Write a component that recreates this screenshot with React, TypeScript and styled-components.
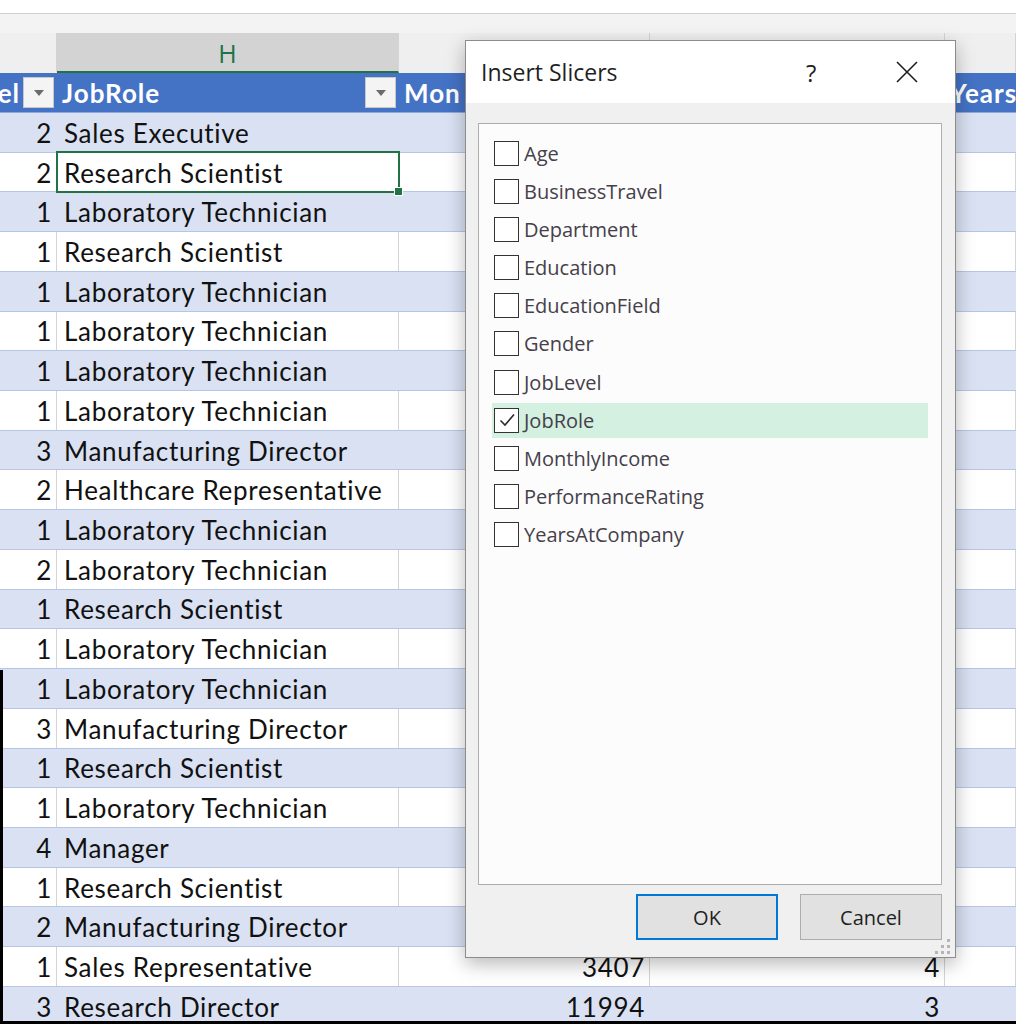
import React from 'react';
import styled, {createGlobalStyle} from "styled-components";

type RowType = {
    level: number
    role: string
    income?: number
    years?: number
}

// only the last two rows show their numbers, the rest sit under the dialog
const rows: RowType[] = [
    {level: 2, role: "Sales Executive"},
    {level: 2, role: "Research Scientist"},
    {level: 1, role: "Laboratory Technician"},
    {level: 1, role: "Research Scientist"},
    {level: 1, role: "Laboratory Technician"},
    {level: 1, role: "Laboratory Technician"},
    {level: 1, role: "Laboratory Technician"},
    {level: 1, role: "Laboratory Technician"},
    {level: 3, role: "Manufacturing Director"},
    {level: 2, role: "Healthcare Representative"},
    {level: 1, role: "Laboratory Technician"},
    {level: 2, role: "Laboratory Technician"},
    {level: 1, role: "Research Scientist"},
    {level: 1, role: "Laboratory Technician"},
    {level: 1, role: "Laboratory Technician"},
    {level: 3, role: "Manufacturing Director"},
    {level: 1, role: "Research Scientist"},
    {level: 1, role: "Laboratory Technician"},
    {level: 4, role: "Manager"},
    {level: 1, role: "Research Scientist"},
    {level: 2, role: "Manufacturing Director"},
    {level: 1, role: "Sales Representative", income: 3407, years: 4},
    {level: 3, role: "Research Director", income: 11994, years: 3},
]

const fields = [
    "Age", "BusinessTravel", "Department", "Education", "EducationField", "Gender",
    "JobLevel", "JobRole", "MonthlyIncome", "PerformanceRating", "YearsAtCompany",
]

const COLS = "57px 342px 251px 295px 1fr"

const GlobalStyle = createGlobalStyle`
  * { box-sizing: border-box; }
  body {
    margin: 0;
    background: #ffffff;
    overflow: hidden;
  }
`

const FilterButton = () => (
    <Filter>
        <svg width="12" height="8" viewBox="0 0 12 8">
            <path d="M1 1h10L6 7z" fill="#6b6b6b"/>
        </svg>
    </Filter>
)

const Checkbox = ({checked}: { checked: boolean }) => (
    <Box>
        {checked && (
            <svg width="20" height="20" viewBox="0 0 20 20">
                <path d="M3.5 10.5l4.5 4.5L17 4.5" fill="none" stroke="#2b2b2b" strokeWidth="1.6"/>
            </svg>
        )}
    </Box>
)

export default function App() {
    return (
        <Page>
            <GlobalStyle/>
            <TopStrip/>
            <BarGap/>
            <ColHeaders>
                <ColHead/>
                <ColHead $active>H</ColHead>
                <ColHead/>
                <ColHead/>
                <ColHead/>
            </ColHeaders>
            <HeaderRow>
                <HeadCell $end>
                    <span>JobLevel</span>
                    <FilterButton/>
                </HeadCell>
                <HeadCell>
                    <span>JobRole</span>
                    <Spacer/>
                    <FilterButton/>
                </HeadCell>
                <HeadCell><span>Mon</span></HeadCell>
                <HeadCell/>
                <HeadCell><span>YearsAtCompany</span></HeadCell>
            </HeaderRow>
            {rows.map((r, i) => (
                <Row key={i} $band={i % 2 === 0}>
                    <Cell $band={i % 2 === 0} $right>{r.level}</Cell>
                    <Cell $band={i % 2 === 0} $selected={i === 1}>{r.role}</Cell>
                    <Cell $band={i % 2 === 0} $right>{r.income}</Cell>
                    <Cell $band={i % 2 === 0} $right>{r.years}</Cell>
                    <Cell $band={i % 2 === 0}/>
                </Row>
            ))}

            <Dialog>
                <TitleBar>
                    <Title>Insert Slicers</Title>
                    <Help>?</Help>
                    <Close>
                        <svg width="22" height="22" viewBox="0 0 22 22">
                            <path d="M1 1L21 21M21 1L1 21" stroke="#1f1f1f" strokeWidth="1.6"/>
                        </svg>
                    </Close>
                </TitleBar>
                <DialogBody>
                    <FieldList>
                        {fields.map(f => (
                            <Field key={f} $checked={f === "JobRole"}>
                                <Checkbox checked={f === "JobRole"}/>
                                <FieldLabel>{f}</FieldLabel>
                            </Field>
                        ))}
                    </FieldList>
                    <Buttons>
                        <DlgButton $primary>OK</DlgButton>
                        <DlgButton>Cancel</DlgButton>
                    </Buttons>
                </DialogBody>
                <Grip width="16" height="16" viewBox="0 0 16 16">
                    <rect x="12" y="0" width="3" height="3" fill="#b5b5b5"/>
                    <rect x="6" y="6" width="3" height="3" fill="#b5b5b5"/>
                    <rect x="12" y="6" width="3" height="3" fill="#b5b5b5"/>
                    <rect x="0" y="12" width="3" height="3" fill="#b5b5b5"/>
                    <rect x="6" y="12" width="3" height="3" fill="#b5b5b5"/>
                    <rect x="12" y="12" width="3" height="3" fill="#b5b5b5"/>
                </Grip>
            </Dialog>
        </Page>
    );
}

const Page = styled.div`
  position: relative;
  width: 1016px;
  height: 1024px;
  overflow: hidden;
  background: #ffffff;
  font-family: Lato, "Open Sans", sans-serif;

  &::before {
    content: "";
    position: absolute;
    left: 0;
    top: 670px;
    bottom: 0;
    width: 3px;
    background: #000;
    z-index: 3;
  }

  &::after {
    content: "";
    position: absolute;
    left: 0;
    right: 0;
    bottom: 0;
    height: 3px;
    background: #000;
    z-index: 3;
  }
`

const TopStrip = styled.div`
  height: 14px;
  background: #ffffff;
  border-bottom: 1px solid #d0d0d0;
`

const BarGap = styled.div`
  height: 19px;
  background: #f3f3f3;
`

const ColHeaders = styled.div`
  display: grid;
  grid-template-columns: ${COLS};
  height: 40px;
  background: #efefef;
`

const ColHead = styled.div<{ $active?: boolean }>`
  display: flex;
  align-items: center;
  justify-content: center;
  border-right: 1px solid #d4d4d4;
  background: ${p => p.$active ? "#d3d3d3" : "transparent"};
  border-bottom: 2px solid ${p => p.$active ? "#217346" : "transparent"};
  color: #217346;
  font-family: "Open Sans", sans-serif;
  font-size: 25px;
  padding-top: 2px;
`

const HeaderRow = styled.div`
  display: grid;
  grid-template-columns: ${COLS};
  height: 40px;
  background: #4472c4;
  border-bottom: 1px solid #8ea9db;
`

const HeadCell = styled.div<{ $end?: boolean }>`
  display: flex;
  align-items: center;
  justify-content: ${p => p.$end ? "flex-end" : "flex-start"};
  gap: 3px;
  overflow: hidden;
  white-space: nowrap;
  padding: 0 3px 0 5px;
  color: #ffffff;
  font-weight: 700;
  font-size: 26px;
  letter-spacing: 1px;
`

const Spacer = styled.div`
  flex: 1;
`

const Filter = styled.div`
  flex: none;
  width: 31px;
  height: 31px;
  display: flex;
  align-items: center;
  justify-content: center;
  background: #f4f4f4;
  border: 1px solid #c8c8c8;
`

const Row = styled.div<{ $band: boolean }>`
  display: grid;
  grid-template-columns: ${COLS};
  height: 39.72px;
  background: ${p => p.$band ? "#d9e1f2" : "#ffffff"};
  border-bottom: 1px solid #b4c6e7;
`

const Cell = styled.div<{ $band: boolean; $right?: boolean; $selected?: boolean }>`
  position: relative;
  display: flex;
  align-items: center;
  justify-content: ${p => p.$right ? "flex-end" : "flex-start"};
  padding: 1px 4px 0 7px;
  border-right: 1px solid ${p => p.$band ? "transparent" : "#d4d4d4"};
  color: #111;
  font-size: 26px;
  letter-spacing: 0.7px;
  white-space: nowrap;

  ${p => p.$selected && `
    &::after {
      content: "";
      position: absolute;
      left: -1px;
      top: -2px;
      right: -2px;
      bottom: -2px;
      border: 2px solid #217346;
    }
    &::before {
      content: "";
      position: absolute;
      right: -5px;
      bottom: -5px;
      width: 7px;
      height: 7px;
      background: #217346;
      border: 1px solid #fff;
      z-index: 1;
    }
  `}
`

const Dialog = styled.div`
  position: absolute;
  left: 465px;
  top: 40px;
  width: 491px;
  height: 918px;
  display: flex;
  flex-direction: column;
  background: #f0f0f0;
  border: 1px solid #8c8c8c;
  box-shadow: 0 6px 18px rgba(0, 0, 0, 0.28);
  font-family: "Open Sans", "Noto Sans", sans-serif;
  z-index: 2;
`

const TitleBar = styled.div`
  height: 62px;
  flex: none;
  display: flex;
  align-items: center;
  background: #ffffff;
  padding: 0 0 0 15px;
`

const Title = styled.div`
  flex: 1;
  font-size: 23px;
  color: #1f1f1f;
`

const Help = styled.div`
  width: 40px;
  font-size: 24px;
  color: #1f1f1f;
  margin-right: 49px;
`

const Close = styled.div`
  width: 60px;
  display: flex;
  align-items: center;
  padding-left: 1px;
`

const DialogBody = styled.div`
  flex: 1;
  display: flex;
  flex-direction: column;
  padding: 20px 13px 0 12px;
`

const FieldList = styled.div`
  height: 762px;
  background: #fcfcfc;
  border: 1px solid #adadad;
  padding: 12px 13px 0 13px;
`

const Field = styled.div<{ $checked: boolean }>`
  height: 35px;
  margin-bottom: 3.1px;
  display: flex;
  align-items: center;
  gap: 5px;
  padding-left: 2px;
  background: ${p => p.$checked ? "#d3f0e0" : "transparent"};
`

const Box = styled.div`
  width: 25px;
  height: 25px;
  flex: none;
  display: flex;
  align-items: center;
  justify-content: center;
  border: 1.5px solid #333333;
  background: #ffffff;
`

const FieldLabel = styled.span`
  font-size: 20px;
  color: #45404a;
`

const Buttons = styled.div`
  display: flex;
  justify-content: flex-end;
  gap: 22px;
  margin-top: 9px;
`

const DlgButton = styled.div<{ $primary?: boolean }>`
  width: 142px;
  height: 46px;
  display: flex;
  align-items: center;
  justify-content: center;
  background: #e1e1e1;
  border: ${p => p.$primary ? "2px solid #0078d7" : "1px solid #adadad"};
  font-size: 20px;
  color: #1f1f1f;
`

const Grip = styled.svg`
  position: absolute;
  right: 4px;
  bottom: 2px;
`
